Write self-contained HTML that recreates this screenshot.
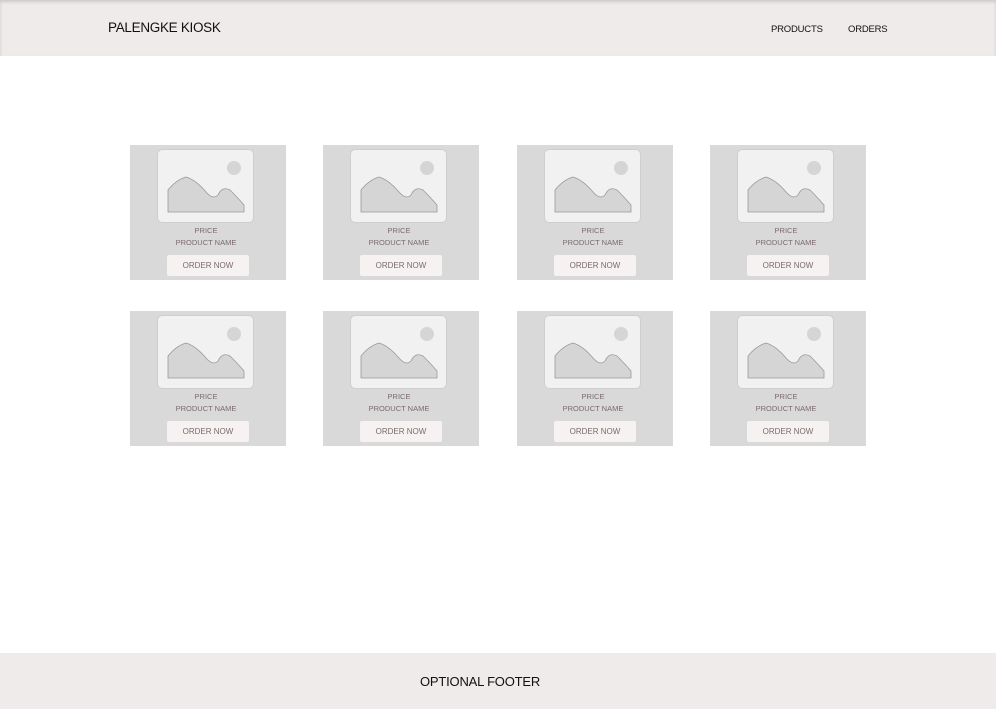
<!DOCTYPE html>
<html><head><style>
body{margin:0;width:996px;height:709px;background:#fff;font-family:"Liberation Sans",sans-serif;position:relative;overflow:hidden}
.hdr{position:absolute;left:0;top:0;width:996px;height:56px;background:#efebea;box-shadow:inset 0 2px 3px rgba(0,0,0,.15)}
.logo{position:absolute;left:108px;top:20px;font-size:13.5px;color:#111;letter-spacing:-0.3px}
.nav{position:absolute;top:24px;font-size:9.5px;color:#111;letter-spacing:-0.2px}
.card{position:absolute;width:156px;height:135px;background:#d9d9d9}
.img{position:absolute;left:28px;top:5px;width:95px;height:72px;background:#f1f1f1;border-radius:4px;box-shadow:0 0 1px #999}
.t{position:absolute;width:100%;text-align:center;font-size:7.5px;color:#7a6a6e;left:-2px}
.btn{position:absolute;left:37px;top:110px;width:82px;height:21px;background:#f6f2f1;border-radius:2px;font-size:8px;color:#7a6a6e;text-align:center;line-height:21px}
.ftr{position:absolute;left:0;top:653px;width:996px;height:56px;background:#efebea}
.ftr span{position:absolute;left:420px;top:21px;font-size:13px;color:#111;letter-spacing:-0.2px}
</style></head><body>
<div class="hdr"><div class="logo">PALENGKE KIOSK</div><div class="nav" style="left:771px">PRODUCTS</div><div class="nav" style="left:848px">ORDERS</div></div>
<div id="g"></div>
<div class="ftr"><span>OPTIONAL FOOTER</span></div>
<script>
var xs=[130,323,517,710],ys=[145,311],h='';
ys.forEach(function(y){xs.forEach(function(x,i){
h+='<div class="card" style="left:'+x+'px;top:'+y+'px"><div class="img"><svg width="95" height="72"><circle cx="76" cy="18" r="7" fill="#d5d5d5"/><path d="M10 62 L10 40 Q18 30 28 27 Q38 30 48 42 Q55 50 60 45 Q64 36 72 40 Q80 48 86 55 L86 62 Z" fill="#d5d5d5" stroke="#999" stroke-width="0.8"/></svg></div><div class="t" style="top:81px">PRICE</div><div class="t" style="top:93px">PRODUCT NAME</div><div class="btn">ORDER NOW</div></div>';
});});
document.getElementById('g').innerHTML=h;
</script>
</body></html>
